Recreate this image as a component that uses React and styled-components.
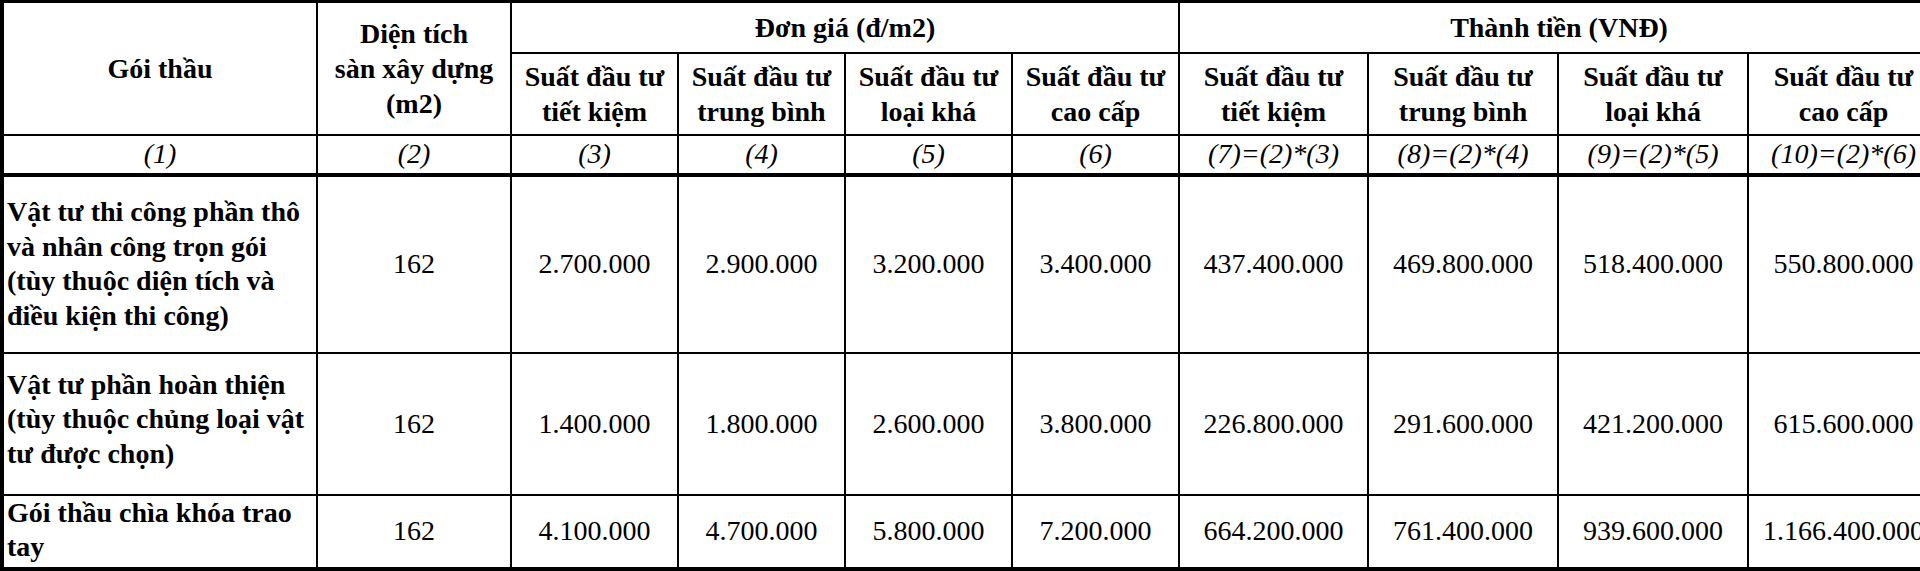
import React from 'react';
import styled, { createGlobalStyle } from 'styled-components';

const GlobalStyle = createGlobalStyle`
  html, body {
    margin: 0;
    padding: 0;
    background: #fff;
    overflow: hidden;
  }
`;

const Sheet = styled.table`
  border-collapse: collapse;
  table-layout: fixed;
  width: 1937px;
  font-family: "Liberation Serif", "Times New Roman", serif;
  font-size: 28px;
  color: #000;
  border-top: 3px solid #000;
  border-left: 4px solid #000;
  border-bottom: 5px solid #000;
`;

const Row = styled.tr`
  height: ${p => p.$h}px;
`;

const HeadCell = styled.th`
  border: 2px solid #000;
  font-weight: 700;
  line-height: 35px;
  text-align: center;
  vertical-align: middle;
  padding: 0 2px;
  white-space: nowrap;
`;

const IndexCell = styled.td`
  border: 2px solid #000;
  border-bottom: 4px solid #000;
  font-style: italic;
  text-align: center;
  vertical-align: middle;
  padding: 0;
  line-height: 30px;
  white-space: nowrap;
`;

const LabelCell = styled.td`
  border: 2px solid #000;
  font-weight: 700;
  line-height: 34.5px;
  text-align: left;
  vertical-align: ${p => (p.$top ? 'top' : 'middle')};
  padding: 0 0 ${p => p.$pb || 0}px 3px;
  white-space: nowrap;
`;

const ClipBox = styled.div`
  height: ${p => p.$h}px;
  padding-top: ${p => p.$top}px;
  box-sizing: border-box;
  overflow: hidden;
`;

const NumCell = styled.td`
  border: 2px solid #000;
  text-align: center;
  vertical-align: middle;
  padding: 0;
  line-height: 32px;
  white-space: nowrap;
`;

const colWidths = [315, 194, 167, 167, 167, 167, 189, 190, 190, 191];

const grades = [
  ['Suất đầu tư', 'tiết kiệm'],
  ['Suất đầu tư', 'trung bình'],
  ['Suất đầu tư', 'loại khá'],
  ['Suất đầu tư', 'cao cấp'],
];

const indexes = [
  '(1)', '(2)', '(3)', '(4)', '(5)', '(6)',
  '(7)=(2)*(3)', '(8)=(2)*(4)', '(9)=(2)*(5)', '(10)=(2)*(6)',
];

const rows = [
  {
    h: 178,
    label: ['Vật tư thi công phần thô', 'và nhân công trọn gói', '(tùy thuộc diện tích và', 'điều kiện thi công)'],
    values: ['162', '2.700.000', '2.900.000', '3.200.000', '3.400.000', '437.400.000', '469.800.000', '518.400.000', '550.800.000'],
  },
  {
    h: 142,
    pb: 8,
    label: ['Vật tư phần hoàn thiện', '(tùy thuộc chủng loại vật', 'tư được chọn)'],
    values: ['162', '1.400.000', '1.800.000', '2.600.000', '3.800.000', '226.800.000', '291.600.000', '421.200.000', '615.600.000'],
  },
  {
    h: 73,
    clip: { h: 71, top: 0 },
    label: ['Gói thầu chìa khóa trao', 'tay'],
    values: ['162', '4.100.000', '4.700.000', '5.800.000', '7.200.000', '664.200.000', '761.400.000', '939.600.000', '1.166.400.000'],
  },
];

const Lines = ({ lines }) =>
  lines.map((l, i) => (
    <React.Fragment key={i}>
      {i > 0 && <br />}
      {l}
    </React.Fragment>
  ));

export default function App() {
  return (
    <>
      <GlobalStyle />
      <Sheet>
        <colgroup>
          {colWidths.map((w, i) => (
            <col key={i} style={{ width: w }} />
          ))}
        </colgroup>
        <thead>
          <Row $h={51}>
            <HeadCell rowSpan={2}>Gói thầu</HeadCell>
            <HeadCell rowSpan={2}>
              <Lines lines={['Diện tích', 'sàn xây dựng', '(m2)']} />
            </HeadCell>
            <HeadCell colSpan={4}>Đơn giá (đ/m2)</HeadCell>
            <HeadCell colSpan={4}>Thành tiền (VNĐ)</HeadCell>
          </Row>
          <Row $h={82}>
            {[...grades, ...grades].map((g, i) => (
              <HeadCell key={i}>
                <Lines lines={g} />
              </HeadCell>
            ))}
          </Row>
          <Row $h={40}>
            {indexes.map(t => (
              <IndexCell key={t}>{t}</IndexCell>
            ))}
          </Row>
        </thead>
        <tbody>
          {rows.map((r, i) => (
            <Row key={i} $h={r.h}>
              <LabelCell $pb={r.pb} $top={!!r.clip}>
                {r.clip ? (
                  <ClipBox $h={r.clip.h} $top={r.clip.top}>
                    <Lines lines={r.label} />
                  </ClipBox>
                ) : (
                  <Lines lines={r.label} />
                )}
              </LabelCell>
              {r.values.map((v, j) => (
                <NumCell key={j}>{v}</NumCell>
              ))}
            </Row>
          ))}
        </tbody>
      </Sheet>
    </>
  );
}
